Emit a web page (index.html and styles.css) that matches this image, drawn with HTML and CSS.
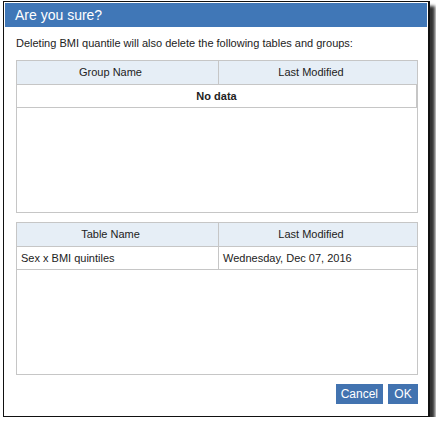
FILE: index.html
```html
<!DOCTYPE html>
<html lang="en">
<head>
  <meta charset="UTF-8">
  <title>Are you sure?</title>
  <link rel="stylesheet" href="styles.css">
</head>
<body>
  <!-- confirm dialog -->
  <div class="dialog">
    <div class="dialog-title">Are you sure?</div>
    <div class="dialog-body">
      <p class="message">Deleting BMI quantile will also delete the following tables and groups:</p>

      <div class="grid">
        <div class="grid-head">
          <div class="cell">Group Name</div>
          <div class="cell">Last Modified</div>
        </div>
        <div class="grid-empty">No data</div>
      </div>

      <div class="grid">
        <div class="grid-head">
          <div class="cell">Table Name</div>
          <div class="cell">Last Modified</div>
        </div>
        <div class="grid-row">
          <div class="cell">Sex x BMI quintiles</div>
          <div class="cell">Wednesday, Dec 07, 2016</div>
        </div>
      </div>

      <div class="actions">
        <button class="btn">Cancel</button>
        <button class="btn">OK</button>
      </div>
    </div>
  </div>
</body>
</html>
```

FILE: styles.css
```css
* {
  margin: 0;
  padding: 0;
  box-sizing: border-box;
}

body {
  font-family: "Liberation Sans", Arial, sans-serif;
  font-size: 11px;
  color: #222;
  background: #fff;
  padding: 1px 0 0 3px;
}

.dialog {
  width: 427px;
  height: 416px;
  border: 1px solid #111;
  border-right-width: 2px;
  padding: 1px;
  background: #fff;
  box-shadow: 5px 5px 3px rgba(0, 0, 0, 0.8);
  display: flex;
  flex-direction: column;
}

.dialog-title {
  background: #4077b7;
  color: #fff;
  font-size: 14px;
  height: 24px;
  line-height: 24px;
  padding-left: 10px;
}

.dialog-body {
  flex: 1;
  padding: 9px 9px 0 11px;
  display: flex;
  flex-direction: column;
}

.message {
  line-height: 14px;
  margin-bottom: 10px;
}

/* tables */
.grid {
  border: 1px solid #c6c6c6;
  height: 153px;
  margin-bottom: 9px;
}

.grid-head,
.grid-row {
  display: grid;
  grid-template-columns: 201px 1fr;
  height: 24px;
  border-bottom: 1px solid #c6c6c6;
}

.grid-head {
  background: #e6eef6;
  text-align: center;
}

.grid-head .cell {
  padding-right: 18px;
}

.grid-row {
  height: 23px;
}

.cell {
  line-height: 23px;
  padding: 0 4px;
}

.cell + .cell {
  border-left: 1px solid #c6c6c6;
}

.grid-empty {
  height: 23px;
  line-height: 22px;
  text-align: center;
  font-weight: bold;
  border-right: 1px solid #c6c6c6;
  border-bottom: 1px solid #c6c6c6;
}

.actions {
  display: flex;
  justify-content: flex-end;
  gap: 5px;
}

.btn {
  background: #4273b0;
  color: #fff;
  border: none;
  font-family: inherit;
  font-size: 12px;
  height: 20px;
  padding: 0 5px;
  min-width: 30px;
  cursor: pointer;
}
```
